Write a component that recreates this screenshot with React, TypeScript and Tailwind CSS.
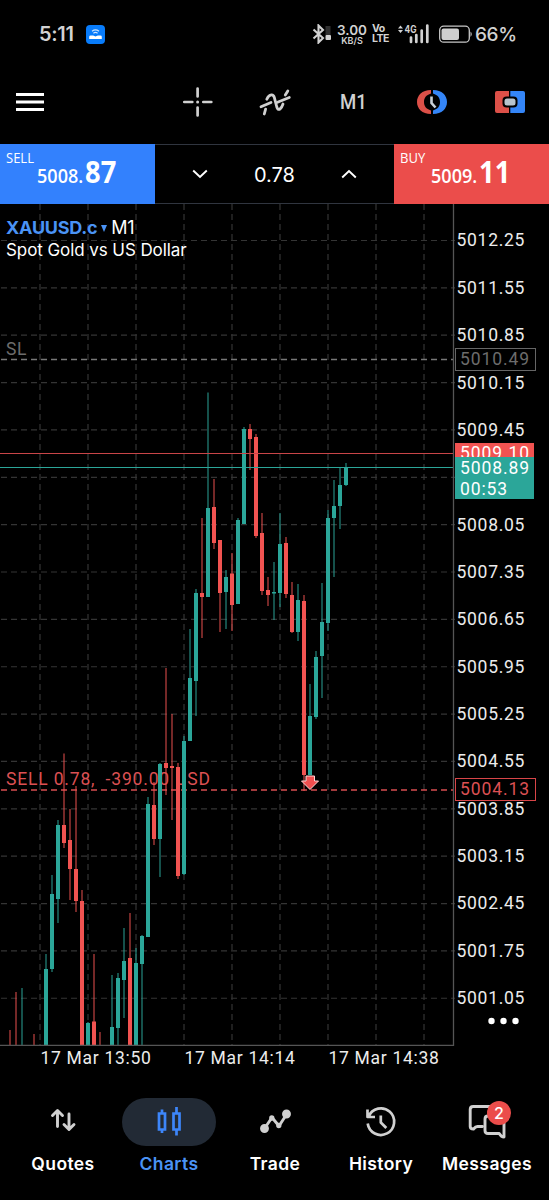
import React from 'react';

type Candle = [x: number, high: number, top: number, bottom: number, low: number, up: 0 | 1];

const UP = '#2ba699';
const DOWN = '#f15351';

const candles: Candle[] = [
  [10, 1030, 0, 0, 1045, 0],
  [16, 992, 0, 0, 1045, 0],
  [22, 988, 0, 0, 1045, 1],
  [34, 1034, 0, 0, 1045, 0],
  [46, 954, 969, 1045, 1045, 1],
  [52, 875, 894, 969, 972, 1],
  [58, 820, 825, 899, 923, 1],
  [64, 753.5, 825, 843, 848, 0],
  [70, 809, 840, 869, 900, 0],
  [76, 786, 869, 901, 912, 0],
  [82, 890, 901, 1045, 1045, 0],
  [88, 1022, 1023, 1045, 1045, 1],
  [94, 954, 1021.5, 1045, 1045, 0],
  [100, 1032, 0, 0, 1045, 0],
  [112, 975, 1027, 1045, 1045, 1],
  [118, 973, 978, 1028, 1045, 1],
  [124, 928, 961, 980, 1018, 1],
  [130, 913, 958, 1045, 1045, 0],
  [136, 948, 963, 1045, 1045, 1],
  [142, 935, 936, 964, 1045, 1],
  [148, 797, 804, 937, 937, 1],
  [154, 782, 805, 839, 845, 0],
  [160, 763, 764, 839, 877, 1],
  [166, 668, 763, 768, 795, 0],
  [172, 714, 766, 768, 820, 0],
  [178, 763, 767, 876, 879, 0],
  [184, 736, 741, 874, 875, 1],
  [190, 629, 678, 741, 741, 1],
  [196, 589, 593, 681, 716, 1],
  [202, 518, 593, 597, 638, 0],
  [208, 392.5, 508, 597, 597, 1],
  [214, 479, 507, 543, 549, 0],
  [220, 540, 540, 593, 632, 0],
  [226, 570, 577, 592, 629, 1],
  [232, 553, 573.5, 605, 631, 0],
  [238, 518, 520, 604, 604, 1],
  [244, 427, 429, 524, 524, 1],
  [250, 424, 429, 439, 470, 0],
  [256, 434, 437, 536, 538, 0],
  [262, 513, 533, 591, 595, 0],
  [268, 577, 590, 595, 606, 0],
  [274, 562, 592, 593.5, 620, 1],
  [280, 513, 544, 593, 607, 1],
  [286, 537, 543, 594, 598, 0],
  [292, 582, 595, 632, 633, 0],
  [298, 584, 600, 632, 641, 1],
  [304, 595, 601, 775, 791, 0],
  [310, 684, 716, 775, 775, 1],
  [316, 651, 657, 717, 719, 1],
  [322, 583, 622, 656, 698, 1],
  [328, 510, 518, 623, 631, 1],
  [334, 480, 506, 518, 577, 1],
  [340, 467, 485, 506, 529, 1],
  [346, 463, 467, 485, 486, 1],
];

const prices = [
  '5012.25', '5011.55', '5010.85', '5010.15', '5009.45', '', '5008.05', '5007.35', '5006.65',
  '5005.95', '5005.25', '5004.55', '5003.85', '5003.15', '5002.45', '5001.75', '5001.05',
];

const gridX = [40, 88, 136, 184, 232, 280, 328, 376, 424];

function StatusBar() {
  return (
    <div className="flex h-[68px] items-center pl-[39px] text-[#d2d2d2]">
      <span className="w-[47px] text-[20px] font-semibold leading-none tracking-[-0.3px]">5:11</span>
      <svg width="19" height="19" viewBox="0 0 19 19">
        <rect width="19" height="19" rx="4" fill="#087cfb" />
        <path d="M3.2 14v-2.2q0-1.4 1.5-1.4h2.5l2.3 1 2.3-1h2.5q1.5 0 1.5 1.4V14z" fill="#fff" />
        <path d="M6 6.2q3.5-2.6 7 0M7.4 8.2q2.1-1.6 4.2 0" stroke="#cfe5ff" strokeWidth="1.100" fill="none" />
      </svg>
      <svg className="ml-[207px]" width="20" height="20" viewBox="0 0 20 20" fill="none">
        <path d="M1.500 5.500l9.500 8.500-4.500 4.500v-17l4.500 4.500-9.500 8.500" stroke="#d2d2d2" strokeWidth="2.100" />
        <rect x="13.500" y="2" width="5" height="9" fill="#303030" />
        <rect x="13.500" y="11" width="5.500" height="5" rx="1" fill="#d2d2d2" />
      </svg>
      <div className="ml-[4px] w-[32px] text-center font-semibold">
        <div className="text-[13.500px] leading-[12px]">3.00</div>
        <div className="text-[9px] leading-[9px]">KB/S</div>
      </div>
      <div className="ml-[4px] w-[18px] text-[10.500px] font-bold leading-[10px] tracking-[-0.5px]">
        <div>Vo</div>
        <div>LTE</div>
      </div>
      <svg className="ml-[8px]" width="31" height="20" viewBox="0 0 31 20">
        <path d="M0 4.500L2.500 1.500 5 4.500zM0 6L2.500 9 5 6z" fill="#d2d2d2" />
        <text x="6.500" y="8.700" fontSize="10" fontWeight="700" textLength="12" lengthAdjust="spacingAndGlyphs" fill="#d2d2d2">4G</text>
        <path d="M13 13.500V18M18.300 11V18M23.700 6.500V18M29.300 1.500V18" stroke="#d2d2d2" strokeWidth="2.700" strokeLinecap="round" />
      </svg>
      <svg className="ml-[10px]" width="34" height="19" viewBox="0 0 34 19">
        <rect x="0.700" y="1.200" width="29.600" height="16" rx="4" fill="none" stroke="#c8c8c8" strokeWidth="1.300" />
        <rect x="2.500" y="3.500" width="17.500" height="11.500" rx="2" fill="#cfcfcf" />
        <path d="M31.500 6.500q2.500 2.700 0 5.500z" fill="#c8c8c8" />
      </svg>
      <span className="ml-[2px] text-[19px] font-medium leading-none tracking-[-0.4px]">66%</span>
    </div>
  );
}

function Toolbar() {
  return (
    <div className="flex h-[76px] items-center pb-[8px] pl-[16px]">
      <svg width="28" height="20" viewBox="0 0 28 20">
        <path d="M0 2.500h28M0 10h28M0 17.500h28" stroke="#fff" strokeWidth="2.900" />
      </svg>
      <svg className="ml-[138px]" width="32" height="32" viewBox="0 0 32 32">
        <path d="M15.600 2.500v8M15.600 21.500v8M2.300 16h8M21.300 16h8" stroke="#d0d0d0" strokeWidth="2.700" strokeLinecap="round" />
        <circle cx="15.600" cy="16" r="1.500" fill="#d0d0d0" />
      </svg>
      <svg className="ml-[44px]" width="34" height="32" viewBox="0 0 34 32" fill="none" stroke="#d0d0d0" strokeWidth="2.800" strokeLinecap="round">
        <path d="M6.300 28l1.300-4.800M3 20.700l10-4.200M8.800 13.300q1.800-4.300 4.500-4.500 2.300-.2 3 2.600l2.500 9.600q1 3.400 3.200 2 1.800-1.300 3-5" />
        <path d="M19.500 16.200l11.800-4.700M27.300 9l2.500-4" />
      </svg>
      <span className="ml-[48px] w-[28px] text-[20px] font-medium leading-none text-[#d0d0d0] [font-family:Roboto,sans-serif]">
        <span className="inline-block origin-left scale-x-[0.93]">M1</span>
      </span>
      <svg className="ml-[49px]" width="30" height="26" viewBox="0 0 30 26" fill="none">
        <path d="M14 1C5 1 0 6.500 0 13s5 12 14 12v-3.500C9 20 7 17 7 13s2-7 7-8.500z" fill="#dc5048" />
        <path d="M16 1c9 0 14 5.500 14 12s-5 12-14 12v-3.500c5-1.500 7-4.500 7-8.500s-2-7-7-8.500z" fill="#3485f7" />
        <path d="M14.500 7.500v6.500l4 4.500" stroke="#c9d0d6" strokeWidth="2.600" />
      </svg>
      <svg className="ml-[48px]" width="30" height="22" viewBox="0 0 30 22">
        <path d="M2 0h12v22H2q-2 0-2-2V2q0-2 2-2z" fill="#dc5048" />
        <path d="M15.300 0H28q2 0 2 2v18q0 2-2 2H15.300z" fill="#3485f7" />
        <rect x="7.500" y="5.500" width="15" height="11" rx="4" fill="#000" />
        <rect x="9.500" y="7.500" width="11" height="7" rx="2.500" fill="#b7c4cd" />
      </svg>
    </div>
  );
}

function QuoteButton({ label, minor, major, className }: { label: string; minor: string; major: string; className: string }) {
  return (
    <div className={`h-[60px] pt-[7px] text-white ${className}`}>
      <div className="text-[14px] leading-[14px] [font-family:'Open_Sans',sans-serif]">
        <span className="inline-block origin-left scale-x-[0.93]">{label}</span>
      </div>
      <div className="-mt-[9px] pl-[31px] font-semibold leading-[30px] [font-family:'Open_Sans',sans-serif]">
        <span className="inline-block origin-left scale-x-[0.88] whitespace-nowrap">
          <span className="text-[20.500px]">{minor}</span>
          <span className="ml-[2px] text-[31px] font-bold tracking-[0.3px]">{major}</span>
        </span>
      </div>
    </div>
  );
}

function TradeBar() {
  return (
    <div className="flex h-[60px]">
      <QuoteButton label="SELL" minor="5008." major="87" className="w-[155px] bg-[#3381fd] pl-[6px]" />
      <div className="flex flex-1 items-center justify-between border-y border-[#30353f] px-[37px]">
        <svg width="16" height="10" viewBox="0 0 16 10" fill="none">
          <path d="M1.200 1.500L8 8l6.800-6.500" stroke="#fff" strokeWidth="1.900" />
        </svg>
        <span className="pt-[2px] text-[20px] leading-none text-white">0.78</span>
        <svg width="16" height="10" viewBox="0 0 16 10" fill="none">
          <path d="M1.200 8.500L8 2l6.800 6.500" stroke="#fff" strokeWidth="1.900" />
        </svg>
      </div>
      <QuoteButton label="BUY" minor="5009." major="11" className="w-[155px] bg-[#eb4d4b] pl-[6px]" />
    </div>
  );
}

function CandleChart() {
  return (
    <svg width="456" height="842" viewBox="0 204 456 842" className="block shrink-0 [font-family:Roboto,sans-serif]">
      <g stroke="#343434" strokeWidth="1.200" strokeDasharray="6 4">
        {gridX.map((x) => (
          <line key={x} x1={x} x2={x} y1="204" y2="1047" />
        ))}
        {prices.map((p, i) => (
          <line key={i} x1="1" x2="455" y1={240.5 + i * 47.36} y2={240.5 + i * 47.36} />
        ))}
      </g>
      <path d="M1 359.500H453" stroke="#777" strokeWidth="1.300" strokeDasharray="6 4" />
      <path d="M1 790H453" stroke="#d84e50" strokeWidth="1.400" strokeDasharray="6 4" />
      <text x="6" y="355" fontSize="17.500" fill="#6c6c6c" letterSpacing="0.500">SL</text>
      <text x="6" y="785" fontSize="17.500" fill="#dc5053" textLength="204" className="whitespace-pre">{'SELL 0.78,  -390.00 USD'}</text>
      {candles.map(([x, high, top, bottom, low, up]) => (
        <g key={x}>
          <line x1={x} x2={x} y1={high} y2={low} stroke={up ? UP : DOWN} strokeOpacity="0.65" strokeWidth="1.500" />
          {bottom > 0 && <rect x={x - 2} y={top} width="4" height={bottom - top} fill={up ? UP : DOWN} />}
        </g>
      ))}
      {/* ask and bid levels */}
      <rect x="0" y="453" width="454" height="1" fill="#c94548" />
      <rect x="0" y="467" width="454" height="1" fill="#2ba699" />
      <path d="M306 776h8.500v5h4L310 789.500 301.500 781h4.500z" fill="#f04f4f" stroke="#ffd7d7" strokeWidth="1" />
      <path d="M0 1045.500H453.500V204" stroke="#555" strokeWidth="1.300" fill="none" />
    </svg>
  );
}

function PriceAxis() {
  return (
    <div className="flex flex-1 flex-col pl-[0.5px] pt-[13.5px] text-[17.500px] tracking-[0.72px] text-[#ececec] [font-family:Roboto,sans-serif]">
      {prices.map((p, i) => (
        <div key={i} className="flex h-[47.36px] shrink-0 items-center leading-none">{p}</div>
      ))}
      <svg className="ml-[30px] mt-[-6px] shrink-0" width="34" height="8" viewBox="0 0 34 8" fill="#fff">
        <circle cx="4.500" cy="4" r="3.200" />
        <circle cx="16.500" cy="4" r="3.200" />
        <circle cx="28.500" cy="4" r="3.200" />
      </svg>
    </div>
  );
}

function Chart() {
  return (
    <div className="relative flex h-[842px]">
      <CandleChart />
      <PriceAxis />

      {/* symbol title over the plot */}
      <div className="absolute left-[6px] top-[13px] text-[17px] leading-[22px] tracking-[-0.08px] text-white">
        <div className="flex items-center">
          <span className="text-[18px] font-bold tracking-[-0.25px] text-[#4a93f5]">XAUUSD.c</span>
          <svg className="ml-[4px] mr-[4px]" width="6" height="7" viewBox="0 0 6 7">
            <path d="M0 0h6L3 7z" fill="#4a93f5" />
          </svg>
          <span className="text-[18px] tracking-[-0.3px]">M1</span>
        </div>
        <div>Spot Gold vs US Dollar</div>
      </div>

      {/* level tags over the price axis */}
      <div className="absolute left-[455px] top-[144px] text-[17.500px] tracking-[0.9px] [font-family:Roboto,sans-serif]">
        <div className="flex h-[23px] w-[81px] items-center border border-[#666] pl-[4px] pt-px leading-none text-[#6c6c6c]">5010.49</div>
      </div>
      <div className="absolute left-[455px] top-[239px] w-[79px] overflow-hidden text-[17.500px] tracking-[0.9px] text-white [font-family:Roboto,sans-serif]">
        <div className="h-[14px] overflow-hidden bg-[#f15351] pl-[5px] leading-[21px]">5009.10</div>
        <div className="h-[42px] bg-[#2ba699] pl-[5px] pt-px leading-[21px]">
          <div>5008.89</div>
          <div>00:53</div>
        </div>
      </div>
      <div className="absolute left-[455px] top-[574px] text-[17.500px] tracking-[0.9px] [font-family:Roboto,sans-serif]">
        <div className="flex h-[23px] w-[81px] items-center border border-[#d84548] pl-[4px] pt-px leading-none text-[#dc5053]">5004.13</div>
      </div>
    </div>
  );
}

function TimeAxis() {
  return (
    <div className="flex h-[34px] pl-[40.5px] pt-[2px] text-[17.500px] leading-[20px] tracking-[0.7px] text-[#ececec] [font-family:Roboto,sans-serif]">
      {['17 Mar 13:50', '17 Mar 14:14', '17 Mar 14:38'].map((t) => (
        <span key={t} className="w-[144px] whitespace-nowrap">{t}</span>
      ))}
    </div>
  );
}

const tabs = [
  {
    label: 'Quotes',
    icon: <path d="M10.500 22.500V7M5.500 11.500l5-5 5 5M22 10v15M17 20.500l5 5 5-5" />,
  },
  {
    label: 'Charts',
    active: true,
    icon: (
      <g stroke="#3d86fa" strokeWidth="2.700" strokeLinecap="butt" strokeLinejoin="miter">
        <path d="M6 9.500h6v16H6zM9 5.500v4M9 25.500v3.500M20.500 9.500h6v16h-6zM23.500 3v6.500M23.500 25.500v6" />
      </g>
    ),
  },
  {
    label: 'Trade',
    icon: (
      <g>
        <path d="M5.500 24.500l7.500-11 7 8.500 7.500-11.500" />
        <circle cx="5.500" cy="24.500" r="3" fill="#d0d0d0" />
        <circle cx="12.800" cy="14" r="1.200" fill="#d0d0d0" />
        <circle cx="19.800" cy="21.500" r="1.200" fill="#d0d0d0" />
        <circle cx="27.500" cy="10" r="3" fill="#d0d0d0" />
      </g>
    ),
  },
  {
    label: 'History',
    icon: (
      <g strokeLinecap="butt" strokeWidth="2.700">
        <path d="M2.500 5.500v7.500h7.500M3.600 12.500A13.300 13.300 0 1 1 2.700 19.500" />
        <path d="M15.800 11.500v7l5.500 5.500" />
      </g>
    ),
  },
  {
    label: 'Messages',
    badge: '2',
    icon: (
      <g>
        <path d="M15.500 22.500h-5q-2 0-4 2.500-3.300 0-3.300-2.500V5.500q0-3 3-3H22q3 0 3 3V11" />
        <path d="M21 12h13.500q2.500 0 2.500 3v18q-2.800 0-4.800-3.500H21q-3 0-3-3V15q0-3 3-3z" />
      </g>
    ),
  },
];

function TabBar() {
  return (
    <div className="flex h-[120px] justify-between pl-[10px] pr-[9px] pt-[18px]">
      {tabs.map((t) => (
        <div key={t.label} className="flex w-[106px] flex-col items-center">
          <div className={`relative flex h-[48px] w-[94px] items-center justify-center rounded-full ${t.active ? 'bg-[#222a35]' : ''}`}>
            <svg
              width={t.badge ? 40 : 32}
              height={36}
              viewBox={t.badge ? '0 0 40 36' : '0 0 32 36'}
              fill="none"
              stroke="#d0d0d0"
              strokeWidth="2.900"
              strokeLinecap="round"
              strokeLinejoin="round"
            >
              {t.icon}
            </svg>
            {t.badge && (
              <span className="absolute left-[47px] top-[3px] flex h-[24px] w-[24px] items-center justify-center rounded-full bg-[#eb4d4b] text-[16px] font-medium leading-none text-white">
                {t.badge}
              </span>
            )}
          </div>
          <span className={`mt-[7px] text-[17.500px] font-semibold leading-[22px] tracking-[0.4px] ${t.active ? 'text-[#4a93f5]' : 'text-white'}`}>{t.label}</span>
        </div>
      ))}
    </div>
  );
}

export default function App() {
  return (
    <div className="flex h-[1200px] w-[549px] flex-col overflow-hidden bg-black [font-family:Inter,sans-serif]">
      <StatusBar />
      <Toolbar />
      <TradeBar />
      <Chart />
      <TimeAxis />
      <TabBar />
    </div>
  );
}
